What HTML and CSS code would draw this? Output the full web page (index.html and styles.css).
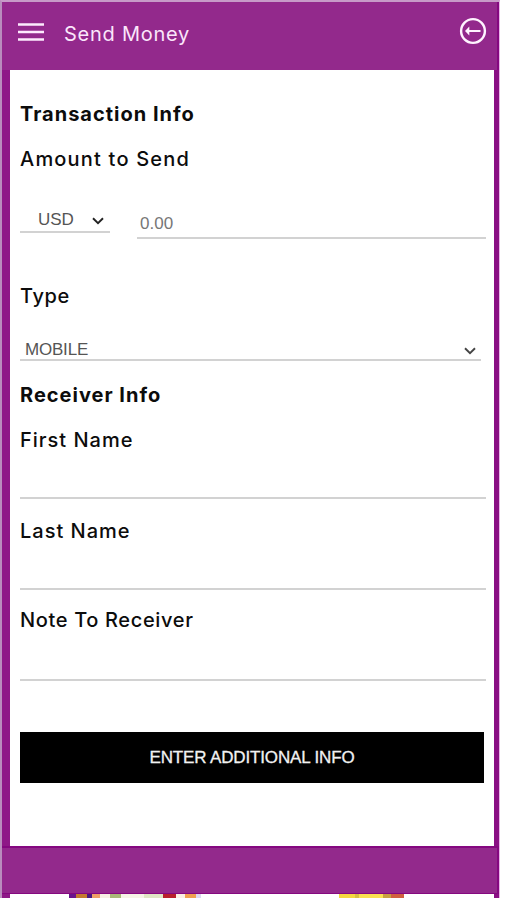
FILE: index.html
```html
<!DOCTYPE html>
<html lang="en">
<head>
<meta charset="utf-8">
<title>Send Money</title>
<link rel="stylesheet" href="styles.css">
</head>
<body>
<div id="app">

<div id="header">
<svg class="menuicon" width="26" height="20" viewBox="0 0 26 20">
<path d="M0 2.5h26M0 10h26M0 17.5h26" fill="none" stroke="#fdeafd" stroke-width="2.4"/>
</svg>
<span class="title">Send Money</span>
<svg class="backicon" width="28" height="28" viewBox="0 0 28 28">
<circle cx="14" cy="14" r="11.9" fill="none" stroke="#fff4ff" stroke-width="2.4"/>
<path d="M7.5 14H21.5" fill="none" stroke="#fff4ff" stroke-width="2"/>
<path d="M6 14L10.3 9.5V18.5Z" fill="#fff4ff"/>
</svg>
</div>

<form id="sendform">
<h2 class="transaction">Transaction Info</h2>
<label class="amountlabel" for="amount">Amount to Send</label>
<div class="amountrow">
<div class="select currency">
<span>USD</span>
<svg class="arrow" width="12" height="8" viewBox="0 0 12 8"><path d="M1 1.3L6 6.2L11 1.3" fill="none" stroke="#222222" stroke-width="1.9"/></svg>
</div>
<input type="text" name="amount" id="amount" placeholder="0.00">
</div>

<label class="typelabel">Type</label>
<div class="select type">
<span>MOBILE</span>
<svg class="arrow" width="12" height="8" viewBox="0 0 12 8"><path d="M1 1.3L6 6.2L11 1.3" fill="none" stroke="#444444" stroke-width="1.9"/></svg>
</div>

<h2 class="receiver">Receiver Info</h2>
<label class="firstlabel" for="firstname">First Name</label>
<input class="line" type="text" name="firstname" id="firstname">
<label class="lastlabel" for="lastname">Last Name</label>
<input class="line" type="text" name="lastname" id="lastname">
<label class="notelabel" for="note">Note To Receiver</label>
<input class="line note" type="text" name="note" id="note">

<button type="button">ENTER ADDITIONAL INFO</button>
</form>

<div id="footer"></div>
<div id="strip">
<div class="banner1"></div>
<div class="banner2"></div>
</div>

</div>
</body>
</html>
```
FILE: styles.css
```css
*{
box-sizing:border-box;
}

body{
margin:0;
background-color:#ffffff;
font-family:"Liberation Sans", Arial, sans-serif;
}

#app{
width:500px;
height:898px;
border-top:2px solid #c79ac8;
border-left:2px solid #b98dbd;
border-right:1px solid #e9b5e8;
overflow:hidden;
}

#header{
display:flex;
height:68px;
padding:15px 10px 0 16px;
background-color:#93298c;
border-right:2px solid #850880;
}

.menuicon{
margin-top:5px;
}

.title{
margin-left:20px;
color:#fbe6fb;
font-family:Inter, sans-serif;
font-size:20px;
line-height:34px;
letter-spacing:0.75px;
}

.backicon{
margin-left:auto;
}

#sendform{
height:776px;
padding:29px 8px 0 10px;
background-color:#ffffff;
border-left:8px solid #8e1887;
border-right:5px solid #8a0f84;
}

h2, label{
display:block;
margin:0;
height:30px;
color:#0c0c0c;
font-family:Inter, sans-serif;
font-size:20px;
line-height:30px;
white-space:nowrap;
}

h2{
font-weight:700;
}

label{
font-weight:500;
}

.transaction{
letter-spacing:1px;
}

.amountlabel{
margin-top:15px;
letter-spacing:1.2px;
}

.amountrow{
display:flex;
height:66px;
}

.select{
display:flex;
align-items:center;
border-bottom:2px solid #d2d2d2;
color:#555555;
}

.currency{
width:90px;
height:59px;
padding:35px 6px 0 18px;
font-size:17px;
}

.arrow{
margin-top:2px;
margin-left:auto;
}

input{
display:block;
width:100%;
padding:0;
border:0;
border-bottom:2px solid #d2d2d2;
background-color:transparent;
font-family:"Liberation Sans", Arial, sans-serif;
font-size:17px;
outline:none;
}

#amount{
flex:1;
height:65px;
margin-left:27px;
padding:37px 0 0 3px;
}

#amount::placeholder{
color:#777777;
}

.typelabel{
margin-top:41px;
letter-spacing:0.6px;
}

.type{
width:461px;
height:50px;
padding:29px 5px 0 5px;
font-size:17px;
}

.type span{
letter-spacing:-0.2px;
}

.receiver{
margin-top:19px;
letter-spacing:1px;
}

.firstlabel{
margin-top:15px;
letter-spacing:1px;
}

.line{
height:44px;
}

.lastlabel{
margin-top:17px;
letter-spacing:1px;
}

.notelabel{
margin-top:15px;
letter-spacing:0.65px;
}

.note{
height:46px;
}

button{
display:block;
width:464px;
height:51px;
margin-top:51px;
padding:0;
border:0;
background-color:#000000;
color:#f2f2f2;
font-family:"Liberation Sans", Arial, sans-serif;
font-size:17px;
letter-spacing:-0.15px;
-webkit-text-stroke:0.3px #f2f2f2;
}

#footer{
height:48px;
background-color:#93298c;
border-top:2px solid #850880;
border-bottom:1px solid #850880;
border-right:2px solid #850880;
}

#strip{
display:flex;
height:4px;
border-left:8px solid #8e1887;
border-right:5px solid #8a0f84;
}

.banner1{
width:132px;
height:4px;
margin-left:59px;
background:linear-gradient(90deg, #6a148c 0 7px, #c47a30 7px 18px, #4b1a80 18px 23px, #efa066 23px 31px, #f7efe4 31px 41px, #a9b878 41px 52px, #f6f4e6 52px 75px, #dfe6c4 75px 94px, #b8202c 94px 107px, #fbf0e4 107px 116px, #f0a050 116px 127px, #dcd8f0 127px);
}

.banner2{
width:65px;
height:4px;
margin-left:138px;
background:linear-gradient(90deg, #f5d840 0 16px, #d8c040 16px 20px, #fae050 20px 44px, #c8a040 44px 52px, #d06040 52px);
}
```
